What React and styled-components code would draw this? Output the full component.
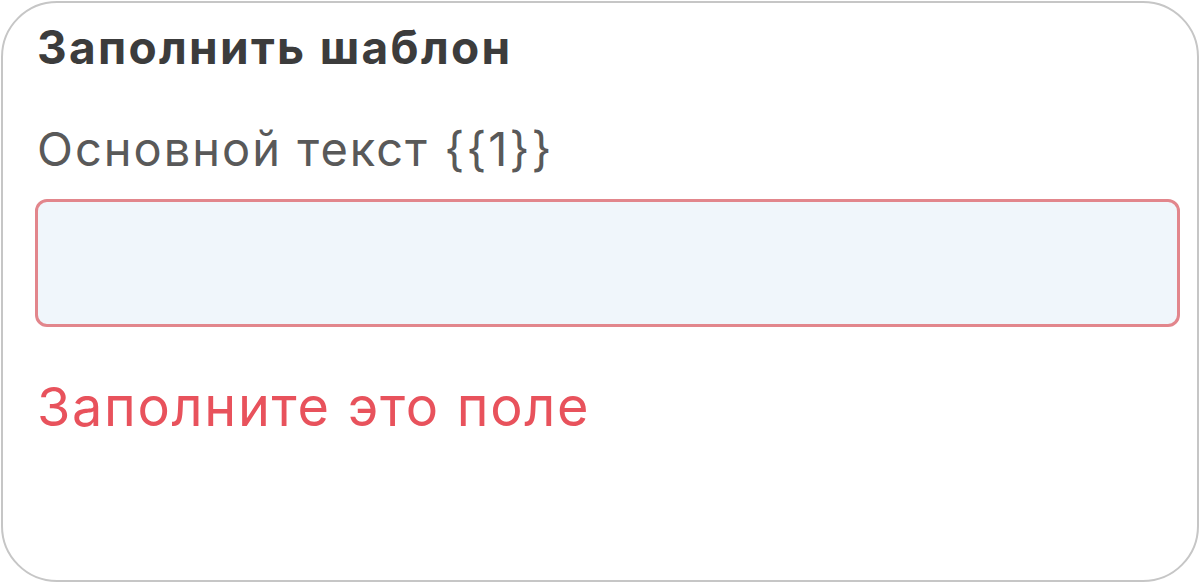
import styled, { createGlobalStyle } from "styled-components";

const GlobalStyle = createGlobalStyle`
  html, body {
    margin: 0;
    padding: 0;
    background: #ffffff;
  }
  body {
    font-family: Inter, "Liberation Sans", Arial, sans-serif;
  }
`;

const Card = styled.div`
  box-sizing: border-box;
  width: 1198px;
  height: 581px;
  margin: 1px 0 0 1px;
  border: 2px solid #c6c6c6;
  border-radius: 56px;
  background: #ffffff;
  padding: 18px 17px 0 32px;
  display: flex;
  flex-direction: column;
`;

const Title = styled.h2`
  margin: 0 0 0 2px;
  font-size: 46px;
  line-height: 52px;
  font-weight: 700;
  letter-spacing: 2.3px;
  color: #3c3c3c;
`;

const Label = styled.label`
  margin: 49px 0 0 2px;
  font-size: 47px;
  line-height: 54px;
  letter-spacing: 2px;
  color: #595959;
`;

const Field = styled.input`
  box-sizing: border-box;
  width: 100%;
  height: 128px;
  margin-top: 23px;
  border: 3px solid ${(p) => (p.$invalid ? "#e2868c" : "#c9ced6")};
  border-radius: 12px;
  background: #f0f6fb;
  outline: none;
  font: inherit;
  font-size: 40px;
  padding: 0 20px;
`;

const ErrorText = styled.div`
  margin: 51px 0 0 2px;
  font-size: 54px;
  line-height: 58px;
  letter-spacing: 1.7px;
  color: #e8525c;
`;

export default function App() {
  return (
    <>
      <GlobalStyle />
      <Card>
        <Title>Заполнить шаблон</Title>
        <Label htmlFor="body-text">Основной текст {"{{1}}"}</Label>
        <Field id="body-text" $invalid />
        <ErrorText>Заполните это поле</ErrorText>
      </Card>
    </>
  );
}
